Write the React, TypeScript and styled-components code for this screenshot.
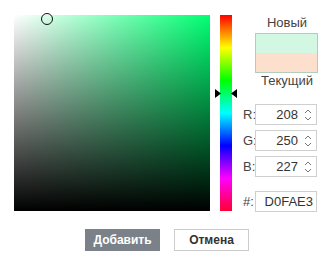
import React from "react";
import styled, { createGlobalStyle } from "styled-components";

const GlobalStyle = createGlobalStyle`
  body {
    margin: 0;
    background: #fff;
    font-family: "Liberation Sans", Arial, sans-serif;
    color: #333;
  }
`;

const Page = styled.div`
  width: 334px;
  height: 267px;
  display: flex;
  flex-direction: column;
`;

const Picker = styled.div`
  display: flex;
  padding: 15px 0 0 14px;
`;

const SatSquare = styled.div<{ hue: number }>`
  position: relative;
  width: 196px;
  height: 196px;
  background:
    linear-gradient(to bottom, rgba(0, 0, 0, 0), #000),
    linear-gradient(to right, #fff, rgba(255, 255, 255, 0)),
    hsl(${(p) => p.hue}, 100%, 50%);
`;

const SatMarker = styled.div`
  position: absolute;
  width: 10px;
  height: 10px;
  border: 1px solid #111;
  border-radius: 50%;
  transform: translate(-6px, -6px);
`;

const HueWrap = styled.div`
  position: relative;
  margin-left: 10px;
  width: 12px;
  height: 196px;
`;

const HueBar = styled.div`
  width: 12px;
  height: 196px;
  background: linear-gradient(
    to bottom,
    #f00 0%,
    #ff0 16.66%,
    #0f0 33.33%,
    #0ff 50%,
    #00f 66.66%,
    #f0f 83.33%,
    #f03 100%
  );
`;

const HueArrows = styled.svg`
  position: absolute;
  left: -5px;
  width: 22px;
  height: 9px;
  transform: translateY(-4px);
`;

const Side = styled.div`
  display: flex;
  flex-direction: column;
  margin-left: 11px;
  width: 77px;
`;

const Caption = styled.div`
  margin-left: 12px;
  width: 64px;
  text-align: center;
  font-size: 13px;
  line-height: 15px;
  color: #444;
`;

const Preview = styled.div`
  margin: 3px 0 0 12px;
  width: 61px;
  height: 38px;
  border: 1px solid #b4ccbe;
  display: flex;
  flex-direction: column;
`;

const Swatch = styled.div<{ color: string }>`
  flex: 1;
  background: ${(p) => p.color};
`;

const Fields = styled.div`
  margin-top: 16px;
  display: flex;
  flex-direction: column;
  gap: 5px;
`;

const Row = styled.label<{ gapTop?: number }>`
  display: flex;
  align-items: center;
  margin-top: ${(p) => p.gapTop ?? 0}px;
  font-size: 13px;
  color: #444;
`;

const RowLabel = styled.span`
  width: 12px;
`;

const Field = styled.div`
  position: relative;
  box-sizing: border-box;
  width: 62px;
  height: 21px;
  border: 1px solid #cfcfcf;
  display: flex;
  align-items: center;
  justify-content: flex-end;
  padding-right: 3px;
  font-size: 13px;
  color: #333;
`;

const Value = styled.span<{ spin?: boolean }>`
  margin-right: ${(p) => (p.spin ? 15 : 0)}px;
`;

const Spinner = styled.svg`
  position: absolute;
  right: 4px;
  top: 3px;
  width: 8px;
  height: 14px;
`;

const Buttons = styled.div`
  display: flex;
  justify-content: center;
  gap: 14px;
  margin-top: 17px;
`;

const Button = styled.button<{ primary?: boolean }>`
  width: 75px;
  height: 22px;
  box-sizing: border-box;
  font-family: "Liberation Sans", Arial, sans-serif;
  font-size: 12px;
  font-weight: bold;
  padding: 0;
  border: 1px solid ${(p) => (p.primary ? "#7b8188" : "#ccc")};
  background: ${(p) => (p.primary ? "#7b8188" : "#fff")};
  color: ${(p) => (p.primary ? "#fff" : "#333")};
`;

const SpinIcon = () => (
  <Spinner viewBox="0 0 8 14">
    <path d="M1 5 L4 2 L7 5" fill="none" stroke="#777" strokeWidth="1" />
    <path d="M1 9 L4 12 L7 9" fill="none" stroke="#777" strokeWidth="1" />
  </Spinner>
);

const rgb = { r: 208, g: 250, b: 227 };

export default function App() {
  const max = Math.max(rgb.r, rgb.g, rgb.b);
  const min = Math.min(rgb.r, rgb.g, rgb.b);
  const hue = 60 * ((rgb.b - rgb.r) / (max - min)) + 120;
  const sat = (max - min) / max;
  const val = max / 255;

  return (
    <Page>
      <GlobalStyle />
      <Picker>
        <SatSquare hue={hue}>
          <SatMarker style={{ left: sat * 196, top: (1 - val) * 196 }} />
        </SatSquare>
        <HueWrap>
          <HueBar />
          <HueArrows viewBox="0 0 22 9" style={{ top: 78 }}>
            <path d="M0 0 L6 4.5 L0 9 Z" fill="#000" />
            <path d="M22 0 L16 4.5 L22 9 Z" fill="#000" />
          </HueArrows>
        </HueWrap>
        <Side>
          <Caption>Новый</Caption>
          <Preview>
            <Swatch color="#d2f8e3" />
            <Swatch color="#fcdfcd" />
          </Preview>
          <Caption>Текущий</Caption>
          <Fields>
            <Row>
              <RowLabel>R:</RowLabel>
              <Field>
                <Value spin>208</Value>
                <SpinIcon />
              </Field>
            </Row>
            <Row>
              <RowLabel>G:</RowLabel>
              <Field>
                <Value spin>250</Value>
                <SpinIcon />
              </Field>
            </Row>
            <Row>
              <RowLabel>B:</RowLabel>
              <Field>
                <Value spin>227</Value>
                <SpinIcon />
              </Field>
            </Row>
            <Row gapTop={9}>
              <RowLabel>#:</RowLabel>
              <Field>
                <Value>D0FAE3</Value>
              </Field>
            </Row>
          </Fields>
        </Side>
      </Picker>
      <Buttons>
        <Button primary>Добавить</Button>
        <Button>Отмена</Button>
      </Buttons>
    </Page>
  );
}
